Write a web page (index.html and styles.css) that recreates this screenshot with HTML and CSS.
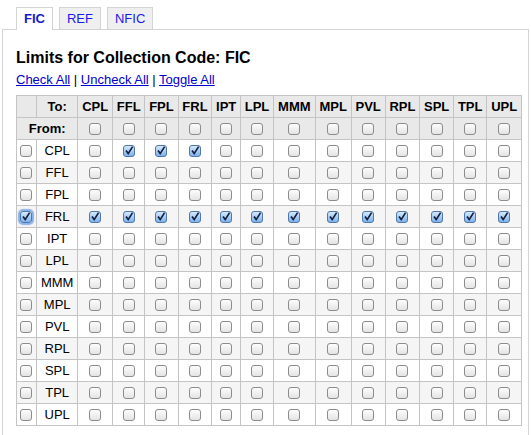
FILE: index.html
```html
<!DOCTYPE html>
<html>
<head>
<meta charset="utf-8">
<link rel="stylesheet" href="styles.css">
</head>
<body>
<div class="tabs">
  <a class="tab active">FIC</a>
  <a class="tab">REF</a>
  <a class="tab">NFIC</a>
</div>
<div class="panel">
  <h2 class="title">Limits for Collection Code: FIC</h2>
  <div class="links"><a href="#">Check All</a> | <a href="#">Uncheck All</a> | <a href="#">Toggle All</a></div>
  <table class="grid">
    <tr class="head">
      <th></th><th>To:</th>
      <th>CPL</th><th>FFL</th><th>FPL</th><th>FRL</th><th>IPT</th><th>LPL</th><th>MMM</th><th>MPL</th><th>PVL</th><th>RPL</th><th>SPL</th><th>TPL</th><th>UPL</th>
    </tr>
    <tr class="head">
      <th colspan="2">From:</th>
      <td><input type="checkbox" class="cb"></td><td><input type="checkbox" class="cb"></td><td><input type="checkbox" class="cb"></td><td><input type="checkbox" class="cb"></td><td><input type="checkbox" class="cb"></td><td><input type="checkbox" class="cb"></td><td><input type="checkbox" class="cb"></td><td><input type="checkbox" class="cb"></td><td><input type="checkbox" class="cb"></td><td><input type="checkbox" class="cb"></td><td><input type="checkbox" class="cb"></td><td><input type="checkbox" class="cb"></td><td><input type="checkbox" class="cb"></td>
    </tr>
    <tr>
      <td><input type="checkbox" class="cb"></td><td>CPL</td>
      <td><input type="checkbox" class="cb"></td><td><input type="checkbox" class="cb" checked></td><td><input type="checkbox" class="cb" checked></td><td><input type="checkbox" class="cb" checked></td><td><input type="checkbox" class="cb"></td><td><input type="checkbox" class="cb"></td><td><input type="checkbox" class="cb"></td><td><input type="checkbox" class="cb"></td><td><input type="checkbox" class="cb"></td><td><input type="checkbox" class="cb"></td><td><input type="checkbox" class="cb"></td><td><input type="checkbox" class="cb"></td><td><input type="checkbox" class="cb"></td>
    </tr>
    <tr class="alt">
      <td><input type="checkbox" class="cb"></td><td>FFL</td>
      <td><input type="checkbox" class="cb"></td><td><input type="checkbox" class="cb"></td><td><input type="checkbox" class="cb"></td><td><input type="checkbox" class="cb"></td><td><input type="checkbox" class="cb"></td><td><input type="checkbox" class="cb"></td><td><input type="checkbox" class="cb"></td><td><input type="checkbox" class="cb"></td><td><input type="checkbox" class="cb"></td><td><input type="checkbox" class="cb"></td><td><input type="checkbox" class="cb"></td><td><input type="checkbox" class="cb"></td><td><input type="checkbox" class="cb"></td>
    </tr>
    <tr>
      <td><input type="checkbox" class="cb"></td><td>FPL</td>
      <td><input type="checkbox" class="cb"></td><td><input type="checkbox" class="cb"></td><td><input type="checkbox" class="cb"></td><td><input type="checkbox" class="cb"></td><td><input type="checkbox" class="cb"></td><td><input type="checkbox" class="cb"></td><td><input type="checkbox" class="cb"></td><td><input type="checkbox" class="cb"></td><td><input type="checkbox" class="cb"></td><td><input type="checkbox" class="cb"></td><td><input type="checkbox" class="cb"></td><td><input type="checkbox" class="cb"></td><td><input type="checkbox" class="cb"></td>
    </tr>
    <tr class="alt">
      <td><input type="checkbox" class="cb focus" checked></td><td>FRL</td>
      <td><input type="checkbox" class="cb" checked></td><td><input type="checkbox" class="cb" checked></td><td><input type="checkbox" class="cb" checked></td><td><input type="checkbox" class="cb" checked></td><td><input type="checkbox" class="cb" checked></td><td><input type="checkbox" class="cb" checked></td><td><input type="checkbox" class="cb" checked></td><td><input type="checkbox" class="cb" checked></td><td><input type="checkbox" class="cb" checked></td><td><input type="checkbox" class="cb" checked></td><td><input type="checkbox" class="cb" checked></td><td><input type="checkbox" class="cb" checked></td><td><input type="checkbox" class="cb" checked></td>
    </tr>
    <tr>
      <td><input type="checkbox" class="cb"></td><td>IPT</td>
      <td><input type="checkbox" class="cb"></td><td><input type="checkbox" class="cb"></td><td><input type="checkbox" class="cb"></td><td><input type="checkbox" class="cb"></td><td><input type="checkbox" class="cb"></td><td><input type="checkbox" class="cb"></td><td><input type="checkbox" class="cb"></td><td><input type="checkbox" class="cb"></td><td><input type="checkbox" class="cb"></td><td><input type="checkbox" class="cb"></td><td><input type="checkbox" class="cb"></td><td><input type="checkbox" class="cb"></td><td><input type="checkbox" class="cb"></td>
    </tr>
    <tr class="alt">
      <td><input type="checkbox" class="cb"></td><td>LPL</td>
      <td><input type="checkbox" class="cb"></td><td><input type="checkbox" class="cb"></td><td><input type="checkbox" class="cb"></td><td><input type="checkbox" class="cb"></td><td><input type="checkbox" class="cb"></td><td><input type="checkbox" class="cb"></td><td><input type="checkbox" class="cb"></td><td><input type="checkbox" class="cb"></td><td><input type="checkbox" class="cb"></td><td><input type="checkbox" class="cb"></td><td><input type="checkbox" class="cb"></td><td><input type="checkbox" class="cb"></td><td><input type="checkbox" class="cb"></td>
    </tr>
    <tr>
      <td><input type="checkbox" class="cb"></td><td>MMM</td>
      <td><input type="checkbox" class="cb"></td><td><input type="checkbox" class="cb"></td><td><input type="checkbox" class="cb"></td><td><input type="checkbox" class="cb"></td><td><input type="checkbox" class="cb"></td><td><input type="checkbox" class="cb"></td><td><input type="checkbox" class="cb"></td><td><input type="checkbox" class="cb"></td><td><input type="checkbox" class="cb"></td><td><input type="checkbox" class="cb"></td><td><input type="checkbox" class="cb"></td><td><input type="checkbox" class="cb"></td><td><input type="checkbox" class="cb"></td>
    </tr>
    <tr class="alt">
      <td><input type="checkbox" class="cb"></td><td>MPL</td>
      <td><input type="checkbox" class="cb"></td><td><input type="checkbox" class="cb"></td><td><input type="checkbox" class="cb"></td><td><input type="checkbox" class="cb"></td><td><input type="checkbox" class="cb"></td><td><input type="checkbox" class="cb"></td><td><input type="checkbox" class="cb"></td><td><input type="checkbox" class="cb"></td><td><input type="checkbox" class="cb"></td><td><input type="checkbox" class="cb"></td><td><input type="checkbox" class="cb"></td><td><input type="checkbox" class="cb"></td><td><input type="checkbox" class="cb"></td>
    </tr>
    <tr>
      <td><input type="checkbox" class="cb"></td><td>PVL</td>
      <td><input type="checkbox" class="cb"></td><td><input type="checkbox" class="cb"></td><td><input type="checkbox" class="cb"></td><td><input type="checkbox" class="cb"></td><td><input type="checkbox" class="cb"></td><td><input type="checkbox" class="cb"></td><td><input type="checkbox" class="cb"></td><td><input type="checkbox" class="cb"></td><td><input type="checkbox" class="cb"></td><td><input type="checkbox" class="cb"></td><td><input type="checkbox" class="cb"></td><td><input type="checkbox" class="cb"></td><td><input type="checkbox" class="cb"></td>
    </tr>
    <tr class="alt">
      <td><input type="checkbox" class="cb"></td><td>RPL</td>
      <td><input type="checkbox" class="cb"></td><td><input type="checkbox" class="cb"></td><td><input type="checkbox" class="cb"></td><td><input type="checkbox" class="cb"></td><td><input type="checkbox" class="cb"></td><td><input type="checkbox" class="cb"></td><td><input type="checkbox" class="cb"></td><td><input type="checkbox" class="cb"></td><td><input type="checkbox" class="cb"></td><td><input type="checkbox" class="cb"></td><td><input type="checkbox" class="cb"></td><td><input type="checkbox" class="cb"></td><td><input type="checkbox" class="cb"></td>
    </tr>
    <tr>
      <td><input type="checkbox" class="cb"></td><td>SPL</td>
      <td><input type="checkbox" class="cb"></td><td><input type="checkbox" class="cb"></td><td><input type="checkbox" class="cb"></td><td><input type="checkbox" class="cb"></td><td><input type="checkbox" class="cb"></td><td><input type="checkbox" class="cb"></td><td><input type="checkbox" class="cb"></td><td><input type="checkbox" class="cb"></td><td><input type="checkbox" class="cb"></td><td><input type="checkbox" class="cb"></td><td><input type="checkbox" class="cb"></td><td><input type="checkbox" class="cb"></td><td><input type="checkbox" class="cb"></td>
    </tr>
    <tr class="alt">
      <td><input type="checkbox" class="cb"></td><td>TPL</td>
      <td><input type="checkbox" class="cb"></td><td><input type="checkbox" class="cb"></td><td><input type="checkbox" class="cb"></td><td><input type="checkbox" class="cb"></td><td><input type="checkbox" class="cb"></td><td><input type="checkbox" class="cb"></td><td><input type="checkbox" class="cb"></td><td><input type="checkbox" class="cb"></td><td><input type="checkbox" class="cb"></td><td><input type="checkbox" class="cb"></td><td><input type="checkbox" class="cb"></td><td><input type="checkbox" class="cb"></td><td><input type="checkbox" class="cb"></td>
    </tr>
    <tr>
      <td><input type="checkbox" class="cb"></td><td>UPL</td>
      <td><input type="checkbox" class="cb"></td><td><input type="checkbox" class="cb"></td><td><input type="checkbox" class="cb"></td><td><input type="checkbox" class="cb"></td><td><input type="checkbox" class="cb"></td><td><input type="checkbox" class="cb"></td><td><input type="checkbox" class="cb"></td><td><input type="checkbox" class="cb"></td><td><input type="checkbox" class="cb"></td><td><input type="checkbox" class="cb"></td><td><input type="checkbox" class="cb"></td><td><input type="checkbox" class="cb"></td><td><input type="checkbox" class="cb"></td>
    </tr>
  </table>
</div>
</body>
</html>
```
FILE: styles.css
```css
html, body {
  margin: 0;
  padding: 0;
  background: #fff;
  font-family: "Liberation Sans", Arial, sans-serif;
  font-size: 13px;
  color: #000;
  overflow: hidden;
}
.tabs {
  display: flex;
  gap: 6px;
  padding: 7px 0 0 16px;
  position: relative;
  z-index: 1;
}
.tab {
  display: block;
  height: 21px;
  line-height: 21px;
  padding: 0 7px;
  border: 1px solid #d4d4d4;
  border-bottom: none;
  background: #efefef;
  color: #1a1aee;
  font-size: 13px;
}
.tab.active {
  background: #fff;
  font-weight: bold;
  color: #1717c8;
  height: 22px;
  margin-bottom: -1px;
}
.panel {
  margin-left: 2px;
  margin-right: 2px;
  border: 1px solid #d4d4d4;
  padding: 0 13px 20px 13px;
  height: 420px;
}
.title {
  margin: 0;
  padding-top: 18px;
  font-size: 16px;
  font-weight: bold;
  line-height: 19px;
}
.links {
  margin-top: 5px;
  line-height: 16px;
  font-size: 13px;
}
.links a {
  color: #0000cc;
  text-decoration: underline;
}
.grid {
  margin-top: 7px;
  width: 506px;
  border-collapse: collapse;
  border: 1px solid #b9b9b9;
}
.grid th, .grid td {
  border: 1px solid #c4c4c4;
  height: 21px;
  padding: 0 3px;
  text-align: center;
  vertical-align: middle;
  font-size: 13px;
}
.grid th {
  font-weight: bold;
}
.grid tr.head {
  background: #e9e9e9;
}
.grid tr.alt {
  background: #f5f5f5;
}
.cb {
  appearance: none;
  -webkit-appearance: none;
  display: block;
  width: 12px;
  height: 12px;
  margin: 0 auto;
  border: 1px solid #8c8c8c;
  border-radius: 3px;
  background: linear-gradient(#fdfdfd, #e4e4e4);
  box-sizing: border-box;
}
.cb:checked {
  border-color: #4f77a8;
  background:
    url("data:image/svg+xml;utf8,<svg xmlns='http://www.w3.org/2000/svg' width='10' height='10' viewBox='0 0 10 10'><path d='M2 4.6 L4.2 7.6 L8.6 0.6' fill='none' stroke='%23142040' stroke-width='1.7'/></svg>") center / 10px 10px no-repeat,
    linear-gradient(#d6e8fc, #7eb1ec);
}
.cb.focus {
  box-shadow: 0 0 1px 2px rgba(100, 155, 230, 0.75);
}
```
